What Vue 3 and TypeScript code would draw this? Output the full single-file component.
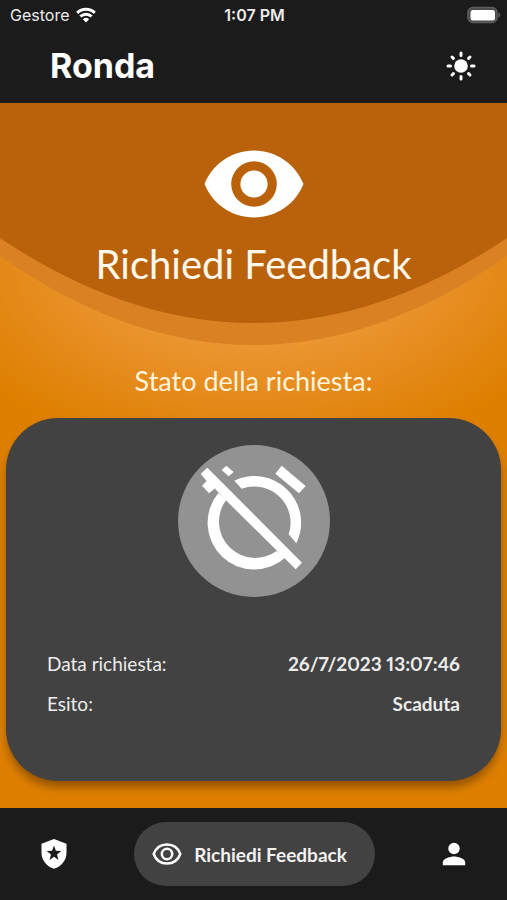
<script setup lang="ts">
import { ref } from 'vue'

interface Detail {
  label: string
  value: string
}

const details: Detail[] = [
  { label: 'Data richiesta:', value: '26/7/2023 13:07:46' },
  { label: 'Esito:', value: 'Scaduta' },
]

const light = ref(false)
</script>

<template>
  <div class="app">
    <header class="top">
      <div class="status">
        <div class="carrier">
          <span>Gestore</span>
          <svg width="20" height="16" viewBox="0 0 20 16" fill="none" stroke="#fff" stroke-width="3">
            <path d="M1.200 5.900a12.600 12.600 0 0 1 17.600 0" />
            <path d="M4.400 9.500a8 8 0 0 1 11.200 0" />
            <path d="M10 15.500 6.900 12.300a4.500 4.500 0 0 1 6.200 0z" fill="#fff" stroke="none" />
          </svg>
        </div>
        <time class="clock">1:07 PM</time>
        <div class="battery">
          <svg width="34" height="18" viewBox="0 0 34 18">
            <rect x="1" y="1.500" width="29" height="15" rx="5" fill="#4a4a4a" stroke="#5c5c5c" stroke-width="1.600" />
            <rect x="3.500" y="4" width="24.500" height="10.500" rx="2.500" fill="#fff" />
            <path d="M31.400 6.400q2 .6 2 2.600t-2 2.600z" fill="#5c5c5c" />
          </svg>
        </div>
      </div>
      <div class="title-row">
        <h1>Ronda</h1>
        <button class="theme" type="button" aria-label="Tema" :aria-pressed="light" @click="light = !light">
          <svg width="30" height="30" viewBox="0 0 30 30" stroke="#fff" stroke-width="3" stroke-linecap="round">
            <circle cx="15" cy="15" r="6.800" fill="#fff" stroke="none" />
            <path d="M15 2v2.500M15 25.500v2.500M2 15h2.500M25.500 15h2.500M6 6l1.400 1.400M22.600 22.600 24 24M6 24l1.400-1.400M22.600 7.400 24 6" />
          </svg>
        </button>
      </div>
    </header>

    <main class="content">
      <section class="hero">
        <svg class="curve" viewBox="0 0 507 242" preserveAspectRatio="none" aria-hidden="true">
          <path d="M0 0H507V153Q253.500 331 0 153Z" fill="#d98123" />
          <path d="M0 0H507V135Q253.500 305 0 135Z" fill="#b9620b" />
        </svg>
        <svg class="hero-eye" width="100" height="68" viewBox="0 0 100 68" aria-hidden="true">
          <path fill="#fff" fill-rule="evenodd" d="M50 0.500C27.500 0.500 8.300 14.400 .5 34 8.300 53.600 27.500 67.500 50 67.500S91.700 53.600 99.500 34C91.700 14.400 72.500 .5 50 .5ZM50 56.800A22.800 22.800 0 1 1 50 11.200 22.800 22.800 0 0 1 50 56.800ZM50 20.400A13.600 13.600 0 1 0 50 47.600 13.600 13.600 0 0 0 50 20.400Z" />
        </svg>
        <h2>Richiedi Feedback</h2>
      </section>

      <h3>Stato della richiesta:</h3>

      <section class="card">
        <div class="badge">
          <svg viewBox="0 0 456 456" fill="#fff" aria-hidden="true">
            <g transform="translate(-39 -30)">
              <path d="M208 137A140 140 0 0 1 394 325L371 298A109 109 0 0 0 230 161Z" />
              <path d="M363 366A140 140 0 0 1 160 174L184 194A109 109 0 0 0 335 348Z" />
              <path d="M127 98 411 383 392 403 182 195 155 156 132 175 111 152 125 138 107 117Z" />
              <path d="M155 151 185 181 184 197 150 161Z" />
              <path d="M170 105 184 92 206 111 191 124Z" />
              <path d="M350 92 422 153 402 175 331 116Z" />
            </g>
          </svg>
        </div>
        <dl class="details">
          <div v-for="item in details" :key="item.label" class="detail">
            <dt>{{ item.label }}</dt>
            <dd>{{ item.value }}</dd>
          </div>
        </dl>
      </section>
    </main>

    <nav class="tabs">
      <a class="tab" href="#ronda" aria-label="Ronda">
        <svg width="26" height="30" viewBox="0 0 26 30">
          <path d="M13 0 25.500 4.700V13.700C25.500 21.200 20.200 27.800 13 29.700 5.800 27.800.5 21.200.5 13.700V4.700Z" fill="#fff" />
          <path d="M13 6.500 14.900 11.800 20.300 12 16 15.400 17.500 20.900 13 17.800 8.500 20.900 10 15.400 5.700 12 11.100 11.800Z" fill="#1b1b1b" />
        </svg>
      </a>
      <a class="tab active" href="#feedback" aria-current="page">
        <svg width="30" height="22" viewBox="0 0 30 22" fill="none" stroke="#fff" stroke-width="2.500">
          <path d="M15 1.500C8.700 1.500 3.900 5 1.700 11 3.900 17 8.700 20.500 15 20.500S26.100 17 28.300 11C26.100 5 21.300 1.500 15 1.500Z" />
          <circle cx="15" cy="11" r="5.200" />
        </svg>
        <span>Richiedi Feedback</span>
      </a>
      <a class="tab" href="#profilo" aria-label="Profilo">
        <svg width="24" height="24" viewBox="0 0 24 24" fill="#fff">
          <circle cx="12" cy="6.500" r="5.700" />
          <path d="M.8 23.200V20.400C.8 16.700 8.300 14.600 12 14.600S23.200 16.700 23.200 20.400V23.200Z" />
        </svg>
      </a>
    </nav>
  </div>
</template>

<style>
body {
  margin: 0;
  background: #1b1b1b;
}
</style>

<style scoped>
.app {
  display: flex;
  flex-direction: column;
  min-height: 100vh;
  color: #fff;
  font-family: Lato, 'Liberation Sans', sans-serif;
}

svg {
  display: block;
}

h1, h2, h3, dl, dd {
  margin: 0;
}

.top {
  background: #1b1b1b;
  font-family: Inter, 'Liberation Sans', sans-serif;
}

.status {
  display: grid;
  grid-template-columns: 1fr auto 1fr;
  align-items: center;
  height: 30px;
  padding: 0 8px 0 10px;
  font-size: 16px;
  color: #ececec;
}

.carrier {
  display: flex;
  align-items: center;
  gap: 7px;
}

.clock {
  font-weight: 600;
}

.battery {
  justify-self: end;
  margin-right: -2px;
}

.title-row {
  display: flex;
  align-items: center;
  justify-content: space-between;
  height: 73px;
  padding: 0 31px 2px 50px;
  box-sizing: border-box;
}

h1 {
  font-size: 34px;
  line-height: 40px;
  font-weight: 700;
}

.theme {
  padding: 0;
  border: 0;
  background: none;
  cursor: pointer;
}

.content {
  flex: 1;
  display: flex;
  flex-direction: column;
  background: radial-gradient(ellipse 67% 210px at 50% 147px, #ec9834 0, #eb9632 45%, #e58a1a 72%, #de7f00 100%);
}

.hero {
  position: relative;
  display: flex;
  flex-direction: column;
  align-items: center;
  height: 242px;
  padding-top: 47px;
  box-sizing: border-box;
}

.curve {
  position: absolute;
  inset: 0;
  width: 100%;
  height: 100%;
}

.hero-eye,
h2 {
  position: relative;
}

h2 {
  margin-top: 20px;
  font-size: 40px;
  line-height: 52px;
  font-weight: 400;
  color: #fff8ec;
}

h3 {
  margin-top: 20px;
  font-size: 27px;
  line-height: 32px;
  font-weight: 400;
  text-align: center;
  color: #fff4dc;
}

.card {
  flex: 1;
  margin: 21px 6px 27px;
  padding: 27px 41px;
  border-radius: 52px;
  background: #424242;
  box-shadow: 0 7px 10px -1px rgba(0, 0, 0, 0.35);
}

.badge {
  width: 152px;
  height: 152px;
  margin: 0 auto;
  border-radius: 50%;
  background: #929292;
}

.details {
  display: flex;
  flex-direction: column;
  gap: 16px;
  margin-top: 55px;
  font-size: 19px;
  line-height: 24px;
  color: #ececec;
}

.detail {
  display: flex;
  justify-content: space-between;
}

dd {
  font-weight: 700;
  font-variant-numeric: proportional-nums;
}

.tabs {
  display: flex;
  align-items: center;
  justify-content: space-between;
  height: 92px;
  padding: 0 41px;
  background: #1b1b1b;
}

.tab {
  display: flex;
  align-items: center;
  color: #fff;
  text-decoration: none;
}

.active {
  gap: 12px;
  height: 64px;
  padding: 0 28px 0 18px;
  border-radius: 32px;
  background: #424242;
  color: #f2f2f2;
  font-size: 19px;
  font-weight: 700;
}
</style>
